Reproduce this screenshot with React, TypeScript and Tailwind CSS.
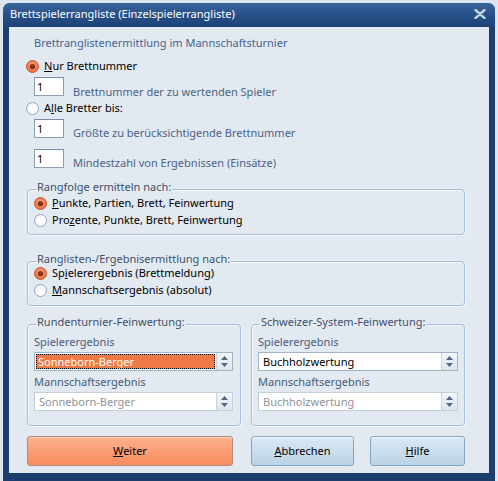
import React from "react";

const Radio = ({ checked }: { checked?: boolean }) =>
  checked ? (
    <svg width="13" height="13" viewBox="0 0 13 13" className="shrink-0">
      <defs>
        <radialGradient id="rgOn" cx="50%" cy="40%" r="60%">
          <stop offset="0%" stopColor="#fbb08f" />
          <stop offset="100%" stopColor="#e9653a" />
        </radialGradient>
        <radialGradient id="rgDot" cx="50%" cy="40%" r="60%">
          <stop offset="0%" stopColor="#a23d1b" />
          <stop offset="100%" stopColor="#6e240e" />
        </radialGradient>
      </defs>
      <circle cx="6.5" cy="6.5" r="6" fill="url(#rgOn)" stroke="#d0582f" strokeWidth="1" />
      <circle cx="6.5" cy="6.5" r="2.6" fill="url(#rgDot)" />
    </svg>
  ) : (
    <svg width="13" height="13" viewBox="0 0 13 13" className="shrink-0">
      <defs>
        <linearGradient id="rgOff" x1="0" y1="0" x2="1" y2="1">
          <stop offset="0%" stopColor="#e6ebf1" />
          <stop offset="50%" stopColor="#ffffff" />
          <stop offset="100%" stopColor="#ffffff" />
        </linearGradient>
      </defs>
      <circle cx="6.5" cy="6.5" r="6" fill="url(#rgOff)" stroke="#8fa4bc" strokeWidth="1" />
    </svg>
  );

const NumInput = () => (
  <div className="w-[30px] h-[19px] shrink-0 bg-white border border-[#8e9db2] border-t-[#7d8ca3] pl-[2px] leading-[17px] text-black">
    1
  </div>
);

const Spin = () => (
  <div className="w-[16px] h-full shrink-0 border-l border-[#c8d4e2] bg-gradient-to-b from-[#f3f6fa] to-[#dce5ef] flex flex-col items-center justify-center gap-[3px]">
    <svg width="7" height="4" viewBox="0 0 7 4">
      <path d="M0 4 L3.5 0 L7 4 Z" fill="#4f6684" />
    </svg>
    <svg width="7" height="4" viewBox="0 0 7 4">
      <path d="M0 0 L3.5 4 L7 0 Z" fill="#4f6684" />
    </svg>
  </div>
);

const Select = ({
  text,
  focused,
  disabled,
}: {
  text: string;
  focused?: boolean;
  disabled?: boolean;
}) => (
  <div
    className={
      "h-[19px] w-full flex bg-white border " +
      (disabled ? "border-[#c3cedb]" : "border-[#a3b2c5]")
    }
  >
    <div className="flex-1 min-w-0 p-[1px] flex">
      {focused ? (
        <div className="flex-1 bg-[#f07a45] outline-1 outline-dotted outline-black -outline-offset-1 text-white pl-[2px] leading-[15px]">
          {text}
        </div>
      ) : (
        <div
          className={
            "flex-1 pl-[3px] leading-[15px] " +
            (disabled ? "text-[#8f9399]" : "text-black")
          }
        >
          {text}
        </div>
      )}
    </div>
    <Spin />
  </div>
);

const Legend = ({ children }: { children: React.ReactNode }) => (
  <legend className="relative -top-[2px] ml-[2px] px-[1px] h-[12px] leading-[12px] text-[#3d506a]">
    {children}
  </legend>
);

const fieldsetCls =
  "border border-[#a5bed8] rounded-[4px] shadow-[inset_1px_1px_0_#f4f7fb,1px_1px_0_#f4f7fb] pl-[6px] pr-[6px] m-0 min-w-0";

export default function App() {
  return (
    <div className="w-[498px] h-[481px] bg-[#dde5ee] overflow-hidden font-['Noto_Sans',sans-serif] text-[11px] leading-[16px]">
      <div className="ml-[3px] mt-[3px] w-[492px] h-[478px] rounded-t-[7px] bg-[#1b3e6c] flex flex-col shadow-[inset_0_1px_0_#6f8fb6]">
        {/* Title bar */}
        <div className="h-[24px] shrink-0 flex items-start justify-between rounded-t-[7px] bg-gradient-to-b from-[#3a6598] via-[#27508a] to-[#1d4276] pl-[7px] pr-[9px] pt-[3px]">
          <span className="text-white text-[11px] leading-[16px]">
            Brettspielerrangliste (Einzelspielerrangliste)
          </span>
          <svg width="12" height="10" viewBox="0 0 12 10" className="mt-[3px]">
            <path
              d="M1.5 1 L10.5 9 M10.5 1 L1.5 9"
              stroke="#c2d3e5"
              strokeWidth="2.4"
              strokeLinecap="round"
            />
          </svg>
        </div>
        {/* Client area */}
        <div className="mx-[6px] mb-[8px] flex-1 bg-[#e2e9f1] pl-[18px] pr-[24px] pt-[8px] flex flex-col">
          <div className="ml-[7px] h-[16px] text-[#46638f]">
            Brettranglistenermittlung im Mannschaftsturnier
          </div>
          <div className="mt-[7px] -ml-[1px] h-[16px] flex items-center gap-[5px] text-black">
            <Radio checked />
            <span>
              <span className="underline">N</span>ur Brettnummer
            </span>
          </div>
          <div className="mt-[3px] ml-[7px] h-[19px] flex items-start gap-[9px]">
            <NumInput />
            <span className="mt-[7px] text-[#4b6387]">
              Brettnummer der zu wertenden Spieler
            </span>
          </div>
          <div className="mt-[4px] -ml-[1px] h-[16px] flex items-center gap-[5px] text-black">
            <Radio />
            <span>
              A<span className="underline">l</span>le Bretter bis:
            </span>
          </div>
          <div className="mt-[3px] ml-[7px] h-[19px] flex items-start gap-[9px]">
            <NumInput />
            <span className="mt-[6px] text-[#4b6387]">
              Größte zu berücksichtigende Brettnummer
            </span>
          </div>
          <div className="mt-[11px] ml-[7px] h-[19px] flex items-start gap-[9px]">
            <NumInput />
            <span className="mt-[6px] text-[#4b6387]">
              Mindestzahl von Ergebnissen (Einsätze)
            </span>
          </div>

          <fieldset className={fieldsetCls + " mt-[15px] pb-[6px]"}>
            <Legend>Rangfolge ermitteln nach:</Legend>
            <div className="flex flex-col gap-[1px] text-black">
              <div className="flex items-center gap-[5px] h-[16px]">
                <Radio checked />
                <span>
                  <span className="underline">P</span>unkte, Partien, Brett, Feinwertung
                </span>
              </div>
              <div className="flex items-center gap-[5px] h-[16px]">
                <Radio />
                <span>
                  Pro<span className="underline">z</span>ente, Punkte, Brett, Feinwertung
                </span>
              </div>
            </div>
          </fieldset>

          <fieldset className={fieldsetCls + " mt-[20px] pb-[7px]"}>
            <Legend>Ranglisten-/Ergebnisermittlung nach:</Legend>
            <div className="-mt-[2px] flex flex-col gap-[1px] text-black">
              <div className="flex items-center gap-[5px] h-[16px]">
                <Radio checked />
                <span>
                  Sp<span className="underline">i</span>elerergebnis (Brettmeldung)
                </span>
              </div>
              <div className="flex items-center gap-[5px] h-[16px]">
                <Radio />
                <span>
                  <span className="underline">M</span>annschaftsergebnis (absolut)
                </span>
              </div>
            </div>
          </fieldset>

          <div className="mt-[12px] grid grid-cols-[214px_214px] gap-x-[10px]">
            <fieldset className={fieldsetCls + " pb-[14px] pr-[7px]"}>
              <Legend>Rundenturnier-Feinwertung:</Legend>
              <div className="mt-[4px] text-[#465c7b]">Spielerergebnis</div>
              <div className="mt-[2px]">
                <Select text="Sonneborn-Berger" focused />
              </div>
              <div className="mt-[3px] text-[#465c7b]">Mannschaftsergebnis</div>
              <div className="mt-[2px]">
                <Select text="Sonneborn-Berger" disabled />
              </div>
            </fieldset>
            <fieldset className={fieldsetCls + " pb-[14px] pr-[6px]"}>
              <Legend>Schweizer-System-Feinwertung:</Legend>
              <div className="mt-[4px] text-[#465c7b]">Spielerergebnis</div>
              <div className="mt-[2px]">
                <Select text="Buchholzwertung" />
              </div>
              <div className="mt-[3px] text-[#465c7b]">Mannschaftsergebnis</div>
              <div className="mt-[2px]">
                <Select text="Buchholzwertung" disabled />
              </div>
            </fieldset>
          </div>

          <div className="mt-[10px] flex items-start">
            <button className="w-[206px] h-[30px] rounded-[3px] border border-[#b08a7a] bg-gradient-to-b from-[#fdb08d] to-[#f98c5e] shadow-[inset_0_1px_0_#ffd0b8] text-black">
              <span className="underline">W</span>eiter
            </button>
            <button className="ml-[18px] w-[103px] h-[30px] rounded-[3px] border border-[#85a5c2] bg-gradient-to-b from-[#dbe9f4] to-[#bad3e6] shadow-[inset_0_1px_0_#f2f8fc] text-black">
              <span className="underline">A</span>bbrechen
            </button>
            <button className="ml-[16px] w-[95px] h-[30px] rounded-[3px] border border-[#85a5c2] bg-gradient-to-b from-[#dbe9f4] to-[#bad3e6] shadow-[inset_0_1px_0_#f2f8fc] text-black">
              <span className="underline">H</span>ilfe
            </button>
          </div>
        </div>
      </div>
    </div>
  );
}
